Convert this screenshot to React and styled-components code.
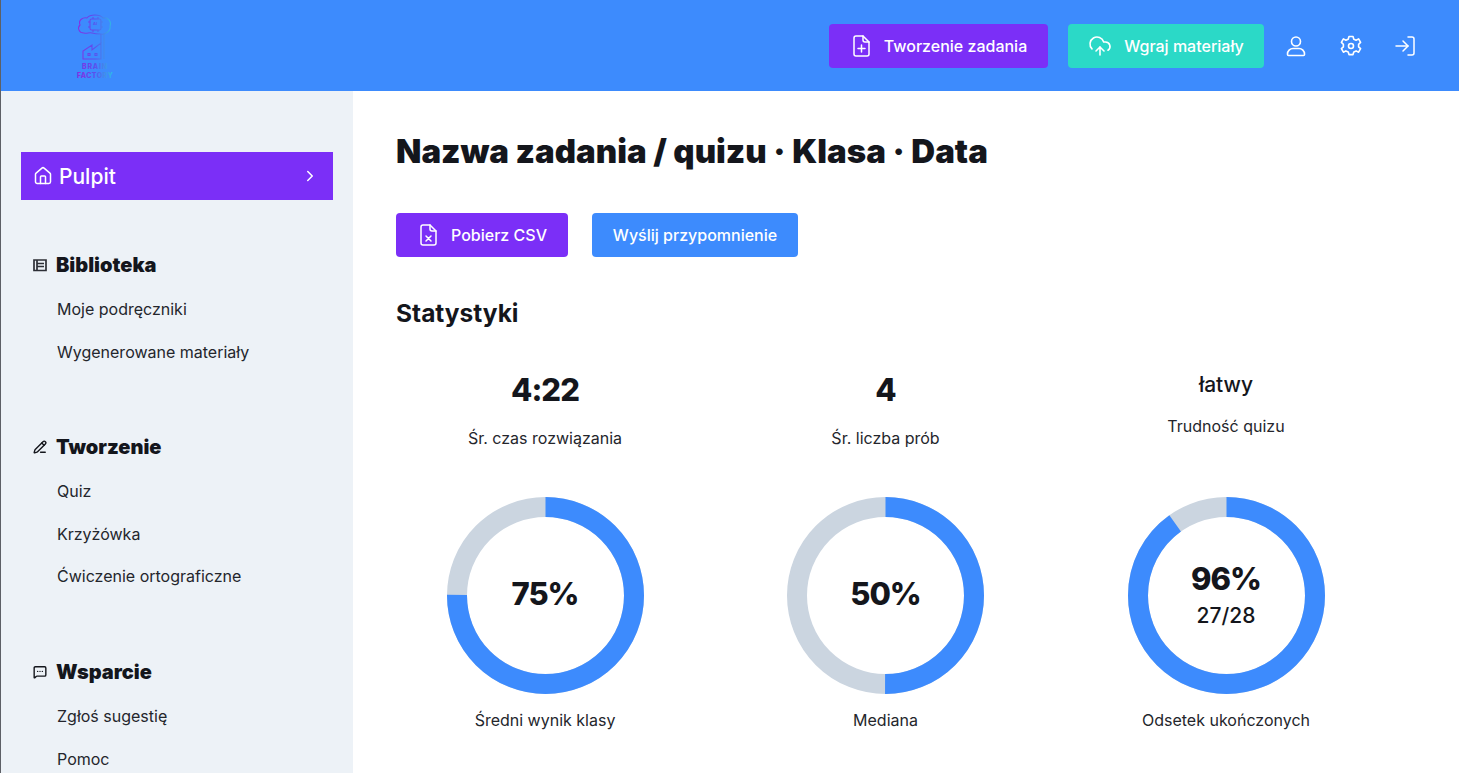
import React from "react";
import styled, { createGlobalStyle } from "styled-components";
import { House, ChevronRight, CloudUpload, LogIn, MessageSquareMore, PencilLine } from "lucide-react";

const blue = "#3d8bfd";
const purple = "#7b2ff7";
const teal = "#2bd9c7";
const ink = "#14161c";
const heading = `"Inter", "Liberation Sans", sans-serif`;

const GlobalStyle = createGlobalStyle`
  html, body { margin: 0; padding: 0; height: 100%; overflow: hidden; background: #fff; }
  body { font-family: "Inter", "Liberation Sans", sans-serif; color: ${ink}; }
`;

const Page = styled.div`
  height: 773px;
  overflow: hidden;
  border-left: 1px solid #5d6066;
  display: flex;
  flex-direction: column;
`;

const Header = styled.header`
  height: 91px;
  flex: none;
  background: ${blue};
  display: flex;
  align-items: center;
  justify-content: space-between;
  padding: 0 42px 0 74px;
`;

const HeaderActions = styled.div`
  display: flex;
  align-items: center;
`;

const Button = styled.button`
  height: 44px;
  width: ${(p) => p.$width}px;
  display: flex;
  align-items: center;
  justify-content: center;
  gap: 12px;
  padding: 0;
  margin-right: ${(p) => p.$after || 0}px;
  border: 0;
  border-radius: 4px;
  background: ${(p) => p.$bg};
  color: #fff;
  font: 500 16px "Inter", sans-serif;
`;

const IconLink = styled.span`
  width: 24px;
  height: 24px;
  margin-left: ${(p) => p.$before}px;
  color: #fff;
  display: flex;
`;

const Body = styled.div`
  flex: 1;
  display: flex;
  min-height: 0;
`;

const Sidebar = styled.aside`
  width: 352px;
  flex: none;
  background: #edf2f7;
  padding: 61px 20px 0;
  box-sizing: border-box;
`;

const PulpitLink = styled.a`
  height: 48px;
  display: flex;
  align-items: center;
  gap: 6px;
  padding: 0 14px 0 12px;
  background: ${purple};
  color: #fff;
  font: 500 21px ${heading};
  margin-bottom: 43px;
`;

const Grow = styled.span`
  flex: 1;
`;

const Section = styled.section`
  margin-bottom: 52.5px;
`;

const SectionTitle = styled.h3`
  height: 44px;
  margin: 0 0 1px;
  padding-left: 12px;
  display: flex;
  align-items: center;
  gap: 9px;
  font: 900 20px ${heading};
  color: ${ink};
`;

const SideItem = styled.a`
  height: 42.4px;
  display: flex;
  align-items: center;
  padding-left: 36px;
  font-size: 16px;
  color: #24262c;
`;

const Main = styled.main`
  flex: 1;
  padding: 37px 0 0 43px;
`;

const Title = styled.h1`
  margin: 0;
  height: 46px;
  font: 900 33px/46px ${heading};
  color: ${ink};
`;

const ButtonRow = styled.div`
  display: flex;
  margin-top: 39px;
`;

const SubTitle = styled.h2`
  margin: 38px 0 0;
  font: 700 24.5px/36px ${heading};
  color: ${ink};
`;

const StatsGrid = styled.div`
  display: grid;
  grid-template-columns: repeat(3, 298px);
  column-gap: 42.5px;
  margin-top: 26px;
`;

const StatCell = styled.div`
  height: 120px;
  display: flex;
  flex-direction: column;
  align-items: center;
  text-align: center;
`;

const StatValue = styled.div`
  font: 800 31px/40px "Inter", sans-serif;
  letter-spacing: -1px;
  margin-top: 13px;
`;

const StatWord = styled.div`
  font: 500 21px/28px "Inter", sans-serif;
  margin-top: 14px;
`;

const StatLabel = styled.div`
  font-size: 16px;
  line-height: 20px;
  color: #24262c;
  margin-top: ${(p) => p.$top}px;
`;

const DonutCell = styled.div`
  display: flex;
  flex-direction: column;
  align-items: center;
`;

const DonutBox = styled.div`
  position: relative;
  width: 197px;
  height: 197px;
  margin-top: 20px;
`;

const DonutText = styled.div`
  position: absolute;
  inset: 0 0 3px;
  display: flex;
  flex-direction: column;
  align-items: center;
  justify-content: center;
`;

const Percent = styled.div`
  font: 800 31px/38px "Inter", sans-serif;
  letter-spacing: -1px;
`;

const Fraction = styled.div`
  font: 500 21px/26px "Inter", sans-serif;
  margin-top: 5px;
`;

const Caption = styled.div`
  margin-top: 16px;
  font-size: 16px;
  line-height: 20px;
  color: #24262c;
`;

const Donut = ({ value, children }) => {
  const r = 88.5;
  const c = 2 * Math.PI * r;
  return (
    <DonutBox>
      <svg width="197" height="197" viewBox="0 0 197 197">
        <circle cx="98.5" cy="98.5" r={r} fill="none" stroke="#cbd5e0" strokeWidth="20" />
        <circle
          cx="98.5"
          cy="98.5"
          r={r}
          fill="none"
          stroke={blue}
          strokeWidth="20"
          strokeDasharray={`${(value / 100) * c} ${c}`}
          transform="rotate(-90 98.5 98.5)"
        />
      </svg>
      <DonutText>{children}</DonutText>
    </DonutBox>
  );
};

const Logo = () => (
  <svg width="42" height="66" viewBox="0 0 42 66" fill="none">
    <defs>
      <linearGradient id="bf" gradientUnits="userSpaceOnUse" x1="2" x2="38" y1="0" y2="0">
        <stop offset="0" stopColor="#8a2be2" />
        <stop offset="0.5" stopColor="#5a50ee" />
        <stop offset="1" stopColor="#2cc0e4" />
      </linearGradient>
    </defs>
    <g stroke="url(#bf)" strokeWidth="1.1">
      <path d="M26 21C30 22 36 18 35 13C37 9 33 4 28 5C25 1 15 1 12 5C8 4 3 7 5 12C2 15 4 20 9 20C12 21 14 19 17 20C20 21 24 21 26 21Z" />
      <rect x="15" y="6" width="11" height="11" rx="1.500" />
      <path d="M13 9h2M13 14h2M26 9h2M26 14h2M18 4v2M23 4v2M18 17v2M23 17v2" />
      <path d="M26 21V30M29 21V46" />
      <path d="M8 46V38L17 32V37L26 30V46H8ZM13 40.500h2v2h-2zM20 40.500h2v2h-2z" />
    </g>
    <text x="20" y="11.500" fontFamily="Inter, sans-serif" fontWeight="700" fontSize="4" textAnchor="middle" fill="url(#bf)">
      AI
    </text>
    <text x="20" y="55.500" textAnchor="middle" fontFamily="Inter, sans-serif" fontWeight="800" fontSize="7" letterSpacing="0.8" fill="url(#bf)">
      BRAIN
    </text>
    <text x="20" y="64.500" textAnchor="middle" fontFamily="Inter, sans-serif" fontWeight="800" fontSize="7" letterSpacing="0.4" fill="url(#bf)">
      FACTORY
    </text>
  </svg>
);

const FileIcon = ({ mark }) => (
  <svg width="22" height="24" viewBox="0 0 22 24" fill="none" stroke="currentColor" strokeWidth="1.5" strokeLinecap="round" strokeLinejoin="round">
    <path d="M13 2H6a2 2 0 0 0-2 2v16a2 2 0 0 0 2 2h11a2 2 0 0 0 2-2V8z" />
    <path d="M13 2v4a2 2 0 0 0 2 2h4" />
    {mark === "plus" ? <path d="M11.500 11v7M8 14.500h7" /> : <path d="M9 13l5 5M14 13l-5 5" />}
  </svg>
);

const UserIcon = () => (
  <svg width="24" height="24" viewBox="0 0 24 24" fill="none" stroke="currentColor" strokeWidth="1.6" strokeLinecap="round">
    <circle cx="12" cy="7.500" r="4.500" />
    <path d="M15 14.500H9a5.500 5.500 0 0 0-5.500 5.500v.5a1 1 0 0 0 1 1h15a1 1 0 0 0 1-1V20a5.500 5.500 0 0 0-5.500-5.500z" />
  </svg>
);

const GearIcon = () => (
  <svg width="24" height="24" viewBox="0 0 24 24" fill="none" stroke="currentColor" strokeWidth="1.6" strokeLinecap="round" strokeLinejoin="round">
    <path d="M10 2.500h4l.8 2.700 2.300 1 2.500-1.300 2 3.500-2 1.900v2.500l2 1.900-2 3.500-2.500-1.300-2.300 1-.8 2.700h-4l-.8-2.700-2.300-1-2.500 1.300-2-3.500 2-1.900v-2.500l-2-1.900 2-3.500 2.500 1.300 2.300-1z" />
    <circle cx="12" cy="12" r="2.500" />
  </svg>
);

const BookIcon = () => (
  <svg width="14" height="14" viewBox="0 0 14 14" fill="none" stroke="#2c2f36" strokeWidth="1.7">
    <path d="M1 2h12v10.500H1zM4 2v10.500M4 5.500h7M4 8.500h7" />
  </svg>
);

const App = () => (
  <Page>
    <GlobalStyle />
    <Header>
      <Logo />
      <HeaderActions>
        <Button $bg={purple} $width={219} $after={20}>
          <FileIcon mark="plus" />
          Tworzenie zadania
        </Button>
        <Button $bg={teal} $width={196}>
          <CloudUpload size={24} strokeWidth={1.6} />
          Wgraj materiały
        </Button>
        <IconLink $before={20}>
          <UserIcon />
        </IconLink>
        <IconLink $before={31}>
          <GearIcon />
        </IconLink>
        <IconLink $before={30}>
          <LogIn size={24} strokeWidth={1.5} />
        </IconLink>
      </HeaderActions>
    </Header>
    <Body>
      <Sidebar>
        <PulpitLink>
          <House size={20} strokeWidth={1.8} />
          Pulpit
          <Grow />
          <ChevronRight size={18} strokeWidth={2} />
        </PulpitLink>
        <Section>
          <SectionTitle>
            <BookIcon />
            Biblioteka
          </SectionTitle>
          <SideItem>Moje podręczniki</SideItem>
          <SideItem>Wygenerowane materiały</SideItem>
        </Section>
        <Section>
          <SectionTitle>
            <PencilLine size={14} strokeWidth={2.4} />
            Tworzenie
          </SectionTitle>
          <SideItem>Quiz</SideItem>
          <SideItem>Krzyżówka</SideItem>
          <SideItem>Ćwiczenie ortograficzne</SideItem>
        </Section>
        <Section>
          <SectionTitle>
            <MessageSquareMore size={14} strokeWidth={2.4} />
            Wsparcie
          </SectionTitle>
          <SideItem>Zgłoś sugestię</SideItem>
          <SideItem>Pomoc</SideItem>
        </Section>
      </Sidebar>
      <Main>
        <Title>Nazwa zadania / quizu · Klasa · Data</Title>
        <ButtonRow>
          <Button $bg={purple} $width={172} $after={24}>
            <FileIcon mark="x" />
            Pobierz CSV
          </Button>
          <Button $bg={blue} $width={206}>Wyślij przypomnienie</Button>
        </ButtonRow>
        <SubTitle>Statystyki</SubTitle>
        <StatsGrid>
          <StatCell>
            <StatValue>4:22</StatValue>
            <StatLabel $top={18}>Śr. czas rozwiązania</StatLabel>
          </StatCell>
          <StatCell>
            <StatValue>4</StatValue>
            <StatLabel $top={18}>Śr. liczba prób</StatLabel>
          </StatCell>
          <StatCell>
            <StatWord>łatwy</StatWord>
            <StatLabel $top={17}>Trudność quizu</StatLabel>
          </StatCell>
          <DonutCell>
            <Donut value={75}>
              <Percent>75%</Percent>
            </Donut>
            <Caption>Średni wynik klasy</Caption>
          </DonutCell>
          <DonutCell>
            <Donut value={50}>
              <Percent>50%</Percent>
            </Donut>
            <Caption>Mediana</Caption>
          </DonutCell>
          <DonutCell>
            <Donut value={90}>
              <Percent>96%</Percent>
              <Fraction>27/28</Fraction>
            </Donut>
            <Caption>Odsetek ukończonych</Caption>
          </DonutCell>
        </StatsGrid>
      </Main>
    </Body>
  </Page>
);

export default App;
